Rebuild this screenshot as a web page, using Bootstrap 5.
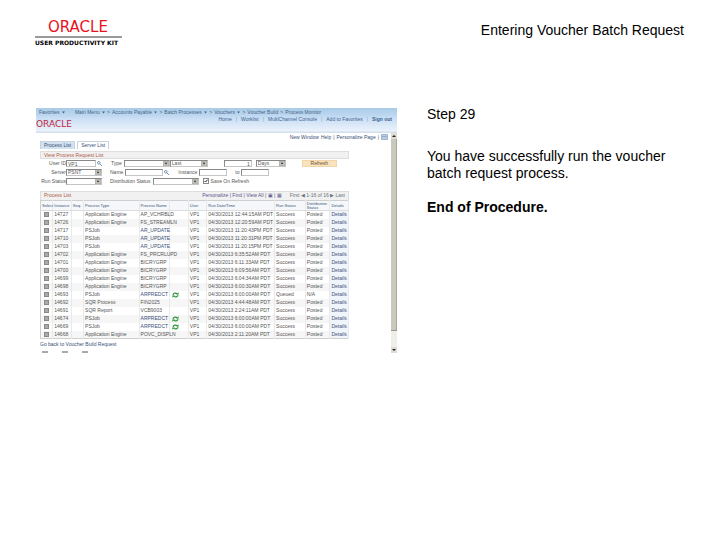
<!DOCTYPE html>
<html lang="en">
<head>
<meta charset="utf-8">
<meta name="viewport" content="width=device-width, initial-scale=1">
<title>Entering Voucher Batch Request</title>
<link rel="stylesheet" href="https://cdn.jsdelivr.net/npm/bootstrap@5.3.0/dist/css/bootstrap.min.css">
<style>
body{font:14px/17px "Liberation Sans",Arial,sans-serif;color:#000;background:#fff}
a{text-decoration:none;color:#3a5078}
.page-top{padding:20px 36px 0 35px}
.topic{font-size:14px;line-height:20px}
.kit-logo{width:87px}
.kit-mark{font:15px/14px "DejaVu Sans",sans-serif;color:#e8131d;padding-left:13px}
.kit-line{height:2px;background:#999;margin:2px 0 0}
.kit-name{font:bold 6px/9px "DejaVu Sans",sans-serif}
.lesson{padding:61px 36px 0;gap:30px}
.shot{flex:0 1 361px;overflow:hidden;font:5px/7px "Liberation Sans",Arial,sans-serif;color:#555}
.step-text{flex:1 1 0;margin-top:-2px}
.step-text h2,.step-text p{font-size:14px;line-height:17px;margin:0 0 17px}
.step-text h2{margin-bottom:25px}
.app-head{height:25px;background:linear-gradient(#a9cbe6,#bfd8f1 32%,#c9def4 40%,#e9f1fb 90%,#cfdbe8);flex-shrink:0}
.crumbs{padding:1px 3px 0;gap:2px;height:8px}
.crumbs a{color:#486484}
.crumbs svg{width:3px;height:3px;margin-left:1px}
.app-links{gap:4px;padding-right:5px;line-height:7px;color:#8aa5c4}
.app-links a{color:#3b6391}
.app-mark{font:9px/9px "DejaVu Sans",sans-serif;color:#c41e3a;margin-top:4px}
.work{padding:1px 42px 0 4px}
.page-links{height:7px;gap:2px;margin-right:-39px}
.tabs-row{height:8px;line-height:6px;gap:2px;margin-bottom:2px}
.tabs-row a{border:1px solid #c9d3df;border-bottom:0;padding:0 3px}
.tabs-row .on{background:#d3e2ef}
.bar{height:8px;line-height:6px;border:1px solid #dedede;background:#f1f1f1;color:#b05a48;padding:0 3px}
.ask{padding:1px 0 0;height:32px}
.ask-row{height:9px;line-height:7px}
.ask label{white-space:nowrap}
.lead-label{width:26px;text-align:right}
.gap-l{margin-left:8px;padding-right:2px}
.gap-w{margin-left:10px}
.ask input[type=text],.ask select{font:inherit;line-height:5px;height:7px;border:1px solid #c5c5c5;border-top-color:#888;border-left-color:#888;border-radius:0;padding:0 1px;background-color:#fff;color:#555;min-width:0}
.ask select{appearance:none;background:#fff url("data:image/svg+xml,%3Csvg xmlns='http://www.w3.org/2000/svg' viewBox='0 0 6 6'%3E%3Cpath fill='%23c8c5bd' stroke='%23888' stroke-width='.6' d='M0 0h6v6H0z'/%3E%3Cpath fill='%23222' d='M1.4 2.2h3.2L3 4.2z'/%3E%3C/svg%3E") right/6px 5px no-repeat}
.w28{width:28px}.w30{width:30px}.w36{width:36px}.w38{width:38px}.w46{width:46px}
.ask input[type=checkbox]{appearance:none;width:6px;height:6px;border:1px solid #888;margin:0 2px 0 4px;background:#fff url("data:image/svg+xml,%3Csvg xmlns='http://www.w3.org/2000/svg' viewBox='0 0 4 4'%3E%3Cpath fill='none' stroke='%23222' stroke-width='1' d='M.5 2l1 1L3.5.7'/%3E%3C/svg%3E") center/4px}
.go{font:inherit;color:#664f38;background:#fae2bb;border:1px solid #f0d5ac;border-radius:0;width:35px;height:7px;line-height:5px;padding:0}
.find{width:5px;height:5px;margin:1px}
.runs{width:100%;table-layout:fixed;border-collapse:collapse;border:1px solid #cfcfcf;margin-bottom:2px}
.runs caption{caption-side:top;padding:0 3px;color:#b05a48;height:9px;line-height:7px;border:1px solid #ddd;border-bottom:0;background:#f1f1f1}
.runs caption a{color:#5c5690}
.runs th,.runs td{padding:0 0 0 1px;height:8px;line-height:7px;white-space:nowrap;border-right:1px solid #e9e9e9}
.runs th{font-size:4px;font-weight:normal;color:#365478;background:#f5f7fa;height:10px;border-bottom:1px solid #ddd}
.runs .two-line{line-height:4px}
.runs tbody tr:nth-child(even){background:#f6f6f6}
.runs td:last-child{background:#f0f5fb}
.runs td:first-child{padding-left:3px;line-height:0}
.runs input{appearance:none;display:block;width:5px;height:5px;border:1px solid #888;background:#aaa;margin:0}
.runs svg{width:7px;height:6px;display:block;margin:0 auto 0 1px}
.c1{width:4%}.c2{width:6%}.c3{width:4%}.c4{width:18%}.c5{width:10%}.c6{width:6%}.c7{width:6%}.c8{width:22%}.c9{width:10%}.c10{width:8%}.c11{width:6%}
.slide-bar{width:6px;background:#efeee9}
.slide-bar button{border:0;padding:0;width:6px;height:6px;background:#dedcd5;line-height:0}
.slide-bar svg{width:6px;height:6px}
.slide-thumb{height:192px;background:#cbc9be;border-right:1px solid #aaa99f;border-bottom:1px solid #99978c}
.cut{gap:14px;padding:0 2px;height:2px;margin-top:3px}
.cut i{width:6px;height:2px;background:#aaa}
</style>
</head>
<body>
<header class="page-top d-flex justify-content-between align-items-start">
  <div class="kit-logo">
    <div class="kit-mark">ORACLE</div>
    <div class="kit-line"></div>
    <div class="kit-name text-nowrap">USER PRODUCTIVITY KIT</div>
  </div>
  <h1 class="topic fw-normal m-0">Entering Voucher Batch Request</h1>
</header>
<main class="lesson d-flex align-items-start">
  <section class="shot d-flex flex-column">
    <div class="app-head">
      <nav class="crumbs d-flex align-items-center text-nowrap">
        <a href="#">Favorites <svg viewBox="0 0 3 3"><path fill="#486484" d="M0 .5h3L1.500 2.500z"/></svg></a><a href="#" class="ms-2">Main Menu <svg viewBox="0 0 3 3"><path fill="#486484" d="M0 .5h3L1.500 2.500z"/></svg></a><span>&gt;</span><a href="#">Accounts Payable <svg viewBox="0 0 3 3"><path fill="#486484" d="M0 .5h3L1.500 2.500z"/></svg></a><span>&gt;</span><a href="#">Batch Processes <svg viewBox="0 0 3 3"><path fill="#486484" d="M0 .5h3L1.500 2.500z"/></svg></a><span>&gt;</span><a href="#">Vouchers <svg viewBox="0 0 3 3"><path fill="#486484" d="M0 .5h3L1.500 2.500z"/></svg></a><span>&gt;</span><a href="#">Voucher Build</a><span>&gt;</span><a href="#">Process Monitor</a>
      </nav>
      <div class="d-flex justify-content-between align-items-start">
        <div class="app-mark">ORACLE</div>
        <nav class="app-links d-flex">
          <a href="#">Home</a><span>|</span><a href="#">Worklist</a><span>|</span><a href="#">MultiChannel Console</a><span>|</span><a href="#">Add to Favorites</a><span>|</span><a href="#" class="fw-bold">Sign out</a>
        </nav>
      </div>
    </div>
    <div class="d-flex flex-grow-1">
      <div class="work flex-grow-1">
        <nav class="page-links d-flex justify-content-end">
          <a href="#">New Window</a><a href="#">Help</a><span>|</span><a href="#">Personalize Page</a><span>|</span>
          <svg width="7" height="6" viewBox="0 0 7 6"><path fill="#b8cbe6" stroke="#8ba0c0" stroke-width=".7" d="M.5.5h6v5h-6zM1 2.500h5"/></svg>
        </nav>
        <nav class="tabs-row d-flex"><a href="#" class="on">Process List</a><a href="#">Server List</a></nav>
        <div class="bar">View Process Request List</div>
        <form class="ask">
          <div class="ask-row d-flex">
            <label class="lead-label" for="uid">User ID</label><input class="w30" type="text" id="uid" value="VP1">
            <svg class="find" viewBox="0 0 5 5"><path fill="none" stroke="#5578a0" stroke-width=".8" d="M.5 1.800a1.300 1.300 0 1 0 2.600 0a1.300 1.300 0 1 0-2.600 0M3 3l2 2"/></svg>
            <label class="gap-l" for="typ">Type</label><select class="w46" id="typ"><option></option></select>
            <select class="w38" id="span" aria-label="Range"><option>Last</option></select>
            <input class="w28 ms-3 text-end" type="text" value="1" aria-label="Count"><select class="w30 ms-1" aria-label="Unit"><option>Days</option></select>
            <button type="button" class="go ms-3">Refresh</button>
          </div>
          <div class="ask-row d-flex">
            <label class="lead-label" for="srv">Server</label><select class="w36" id="srv"><option>PSNT</option></select>
            <label class="gap-l" for="nam">Name</label><input class="w38" type="text" id="nam">
            <svg class="find" viewBox="0 0 5 5"><path fill="none" stroke="#5578a0" stroke-width=".8" d="M.5 1.800a1.300 1.300 0 1 0 2.600 0a1.300 1.300 0 1 0-2.600 0M3 3l2 2"/></svg>
            <label class="gap-l" for="ins">Instance</label><input class="w28" type="text" id="ins">
            <label class="gap-l" for="to">to</label><input class="w28" type="text" id="to">
          </div>
          <div class="ask-row d-flex">
            <label class="lead-label" for="rst">Run Status</label><select class="w36" id="rst"><option></option></select>
            <label class="gap-l" for="dst">Distribution Status</label><select class="w46" id="dst"><option></option></select>
            <input type="checkbox" id="sav" checked><label for="sav">Save On Refresh</label>
          </div>
        </form>
        <table class="runs">
          <caption><div class="d-flex"><span class="me-auto">Process List</span><a href="#">Personalize | Find | View All | ▣ | ▦</a><span class="ms-2 text-secondary">First ◀ 1-16 of 16 ▶ Last</span></div></caption>
          <colgroup><col class="c1"><col class="c2"><col class="c3"><col class="c4"><col class="c5"><col class="c6"><col class="c7"><col class="c8"><col class="c9"><col class="c10"><col class="c11"></colgroup>
          <thead><tr><th>Select</th><th>Instance</th><th>Seq.</th><th>Process Type</th><th>Process Name</th><th></th><th>User</th><th>Run Date/Time</th><th>Run Status</th><th class="two-line">Distribution<br>Status</th><th>Details</th></tr></thead>
          <tbody id="rows"></tbody>
        </table>
        <a href="#">Go back to Voucher Build Request</a>
        <div class="cut d-flex"><i></i><i></i><i></i></div>
      </div>
      <div class="slide-bar d-flex flex-column">
        <button type="button" aria-label="Scroll up"><svg viewBox="0 0 6 6"><path fill="#222" d="M1 4h4L3 2z"/></svg></button>
        <div class="slide-thumb"></div>
        <button type="button" class="mt-auto" aria-label="Scroll down"><svg viewBox="0 0 6 6"><path fill="#222" d="M1 2h4L3 4z"/></svg></button>
      </div>
    </div>
  </section>
  <section class="step-text">
    <h2 class="fw-normal">Step 29</h2>
    <p>You have successfully run the voucher batch request process.</p>
    <p class="fw-bold">End of Procedure.</p>
  </section>
</main>
<script src="https://cdn.jsdelivr.net/npm/bootstrap@5.3.0/dist/js/bootstrap.bundle.min.js"></script>
<script>
const A='Application Engine',J='PSJob';
const runs=[
[14727,A,'AP_VCHRBLD','12:44:15AM'],[14726,A,'FS_STREAMLN','12:20:59AM'],[14717,J,'AR_UPDATE','11:20:43PM'],[14710,J,'AR_UPDATE','11:20:31PM'],
[14703,J,'AR_UPDATE','11:20:15PM'],[14702,A,'FS_PRCRLUPD','6:35:52AM'],[14701,A,'BICRYGRP','6:11:33AM'],[14700,A,'BICRYGRP','6:09:56AM'],
[14699,A,'BICRYGRP','6:04:34AM'],[14698,A,'BICRYGRP','6:00:30AM'],[14693,J,'ARPREDCT','6:00:00AM'],[14692,'SQR Process','FIN2025','4:44:48AM'],
[14691,'SQR Report','VCB9003','2:24:11AM'],[14674,J,'ARPREDCT','6:00:00AM'],[14669,J,'ARPREDCT','6:00:00AM'],[14668,A,'POVC_DISPLN','2:11:20AM']];
const spin='<svg viewBox="0 0 7 6"><path fill="none" stroke="#2c9a3c" stroke-width="1.2" d="M1 3.2C1 1 4 .4 5.2 2M6 2.8C6 5 3 5.6 1.8 4"/><path fill="#2c9a3c" d="M4 2.4h2.6V.2zM3 3.6H.4v2.2z"/></svg>';
document.getElementById('rows').innerHTML=runs.map(([n,t,p,h])=>{
 const q=n===14693;
 return `<tr><td><input type="checkbox" aria-label="Select ${n}"></td><td>${n}</td><td></td><td>${t}</td><td>${t===J?`<a href="#">${p}</a>`:p}</td><td>${p==='ARPREDCT'?spin:''}</td><td>VP1</td><td>04/30/2013 ${h} PDT</td><td>${q?'Queued':'Success'}</td><td>${q?'N/A':'Posted'}</td><td><a href="#">Details</a></td></tr>`}).join('');
</script>
</body>
</html>
